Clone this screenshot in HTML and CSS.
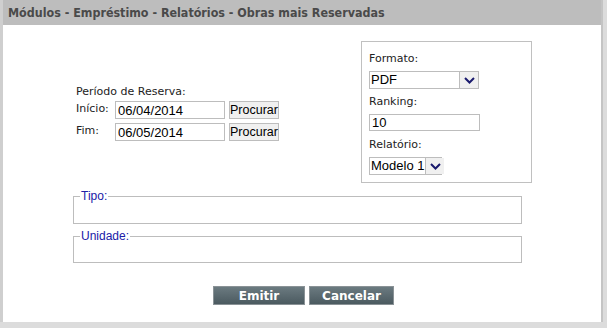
FILE: index.html
```html
<!DOCTYPE html>
<html lang="pt">
<head>
    <meta charset="UTF-8">
    <title>Obras mais Reservadas</title>
    <link rel="stylesheet" href="styles.css">
</head>
<body>
    <div class="window">
        <div class="title">Módulos - Empréstimo - Relatórios - Obras mais Reservadas</div>
        <div class="content">
            <div class="top">
                <div class="periodo">
                    <div class="lbl">Período de Reserva:</div>
                    <div class="row">
                        <span class="row-lbl">Início:</span>
                        <input type="text" class="field date" value="06/04/2014">
                        <button class="btn-small">Procurar</button>
                    </div>
                    <div class="row">
                        <span class="row-lbl">Fim:</span>
                        <input type="text" class="field date" value="06/05/2014">
                        <button class="btn-small">Procurar</button>
                    </div>
                </div>
                <div class="opcoes">
                    <div class="lbl">Formato:</div>
                    <div class="select wide"><span class="sel-val">PDF</span><span class="arrow"><svg width="11" height="7" viewBox="0 0 11 7"><path d="M1 1 L5.5 5.5 L10 1" fill="none" stroke="#1a1a6e" stroke-width="2"/></svg></span></div>
                    <div class="lbl">Ranking:</div>
                    <input type="text" class="field rank" value="10">
                    <div class="lbl">Relatório:</div>
                    <div class="select modelo"><span class="sel-val">Modelo 1</span><span class="arrow"><svg width="11" height="7" viewBox="0 0 11 7"><path d="M1 1 L5.5 5.5 L10 1" fill="none" stroke="#1a1a6e" stroke-width="2"/></svg></span></div>
                </div>
            </div>
            <fieldset class="group">
                <legend>Tipo:</legend>
            </fieldset>
            <fieldset class="group">
                <legend>Unidade:</legend>
            </fieldset>
            <div class="actions">
                <button class="btn-main emitir">Emitir</button>
                <button class="btn-main cancelar">Cancelar</button>
            </div>
        </div>
    </div>
</body>
</html>
```

FILE: styles.css
```css
html, body {
    margin: 0;
    padding: 0;
}

body {
    width: 607px;
    height: 328px;
    background: #dcdcdc;
    font-family: "DejaVu Sans", Verdana, sans-serif;
    font-size: 11px;
    color: #222;
    overflow: hidden;
}

.window {
    width: 603px;
    height: 322px;
    border-left: 3px solid #cfcfcf;
    border-right: 2px solid #c4c4c4;
    background: #fff;
    box-sizing: border-box;
    display: flex;
    flex-direction: column;
}

.title {
    height: 25px;
    line-height: 26px;
    background: #bdbdbd;
    color: #4a4a4a;
    font-family: "DejaVu Sans Condensed", "DejaVu Sans", sans-serif;
    font-weight: bold;
    font-size: 12.4px;
    padding-left: 5px;
}

.content {
    padding: 16px 0 0 70px;
}

.top {
    display: flex;
    align-items: flex-start;
}

.periodo {
    width: 285px;
    padding: 0 0 0 3px;
    margin-top: 44px;
}

.lbl {
    line-height: 13px;
}

.periodo .lbl {
    margin-bottom: 3px;
}

.row {
    display: flex;
    align-items: center;
    margin-bottom: 4px;
}

.row-lbl {
    width: 39px;
    margin-top: -4px;
}

.field {
    height: 18px;
    box-sizing: border-box;
    border: 1px solid #bdbdbd;
    font-family: "Liberation Sans", Arial, sans-serif;
    font-size: 13px;
    padding: 0 2px;
    color: #000;
    margin: 0;
}

.date {
    width: 110px;
}

.btn-small {
    width: 50px;
    height: 18px;
    margin-left: 4px;
    padding: 0;
    border: 1px solid #bdbdbd;
    background: #f0f0f0;
    font-family: "Liberation Sans", Arial, sans-serif;
    font-size: 12.5px;
    color: #000;
    line-height: 16px;
    white-space: nowrap;
}

.opcoes {
    width: 171px;
    height: 142px;
    box-sizing: border-box;
    border: 1px solid #c0c0c0;
    padding: 10px 0 0 7px;
}

.opcoes .lbl {
    margin-bottom: 6px;
}

.select {
    display: inline-flex;
    height: 18px;
    box-sizing: border-box;
    border: 1px solid #bdbdbd;
    font-family: "Liberation Sans", Arial, sans-serif;
    font-size: 13px;
    color: #000;
    margin-bottom: 6px;
}

.select.wide {
    width: 110px;
}

.select.modelo {
    width: 73px;
}

.sel-val {
    flex: 1;
    padding: 0 1px;
    line-height: 16px;
    white-space: nowrap;
}

.arrow {
    width: 18px;
    flex: none;
    border-left: 1px solid #bdbdbd;
    background: #f0f0f0;
    display: flex;
    align-items: center;
    justify-content: center;
}

.rank {
    width: 111px;
    height: 17px;
    display: block;
    margin-bottom: 7px;
}

.group {
    width: 449px;
    height: 35px;
    box-sizing: border-box;
    margin: 6px 0 0 0;
    padding: 0;
    border: 1px solid #bdbdbd;
}

.group + .group {
    margin-top: 5px;
    height: 34px;
}

.group legend {
    font-family: "Liberation Sans", Arial, sans-serif;
    font-size: 12px;
    line-height: 14px;
    color: #2020a8;
    padding: 0 1px;
    margin-left: 6px;
}

.actions {
    display: flex;
    gap: 4px;
    margin: 23px 0 0 140px;
}

.btn-main {
    height: 19px;
    border: 1px solid #8a9296;
    background: linear-gradient(#6b7a80, #4b5a60);
    color: #fff;
    font-family: "DejaVu Sans", Verdana, sans-serif;
    font-weight: bold;
    font-size: 12px;
    padding: 0;
    line-height: 16px;
}

.emitir {
    width: 92px;
}

.cancelar {
    width: 85px;
}
```
